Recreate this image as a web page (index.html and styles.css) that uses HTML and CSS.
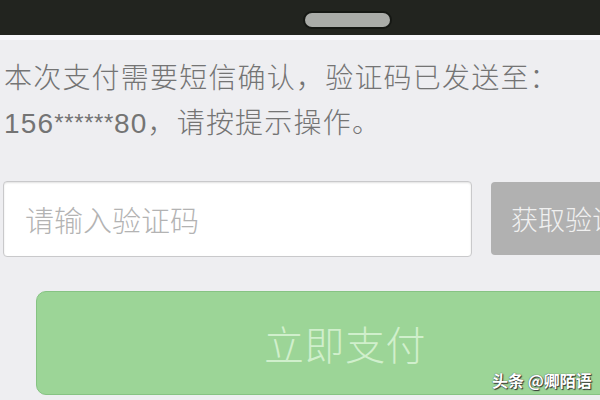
FILE: index.html
```html
<!DOCTYPE html>
<html lang="zh">
<head>
<meta charset="utf-8">
<link rel="stylesheet" href="styles.css">
</head>
<body>
<div class="screen">
  <div class="status"><div class="pill"></div></div>
  <div class="strip"></div>
  <p class="msg">本次支付需要短信确认，验证码已发送至：<br>156<span class="mask">******</span>80，请按提示操作。</p>
  <div class="row">
    <div class="input">请输入验证码</div>
    <div class="getcode">获取验证码</div>
  </div>
  <div class="pay">立即支付</div>
  <div class="watermark">头条 @卿陌语</div>
</div>
</body>
</html>
```
FILE: styles.css
```css
html, body {
  margin: 0;
  padding: 0;
  background: #eeeef1;
}
.screen {
  position: relative;
  width: 600px;
  height: 400px;
  overflow: hidden;
  font-family: "Noto Sans CJK SC", "Noto Sans", sans-serif;
  background: #eeeef1;
}
.status {
  height: 35px;
  background: #22241f;
  display: flex;
  padding-top: 13px;
  padding-left: 305px;
  box-sizing: border-box;
}
.pill {
  width: 85px;
  height: 14px;
  border-radius: 7px;
  background: #aaaca8;
  box-shadow: 0 0 0 2px #161814;
}
.strip {
  height: 5px;
  background: #f6f6fa;
}
.msg {
  margin: 17px 0 0 0;
  padding-left: 4px;
  font-family: "Liberation Sans", "Noto Sans CJK SC", sans-serif;
  font-size: 28px;
  font-weight: 300;
  line-height: 44px;
  letter-spacing: 1.2px;
  color: #747474;
  white-space: nowrap;
}
.mask {
  font-size: 24px;
  letter-spacing: 0.6px;
  vertical-align: 2px;
}
.row {
  display: flex;
  margin-top: 35px;
  margin-left: 3px;
  gap: 19px;
}
.input {
  flex: none;
  width: 469px;
  height: 76px;
  box-sizing: border-box;
  background: #fff;
  border: 1px solid #c9c9cb;
  border-radius: 4px;
  box-shadow: inset 0 1px 2px rgba(0,0,0,0.12);
  display: flex;
  align-items: center;
  padding-left: 21px;
  font-size: 29px;
  font-weight: 300;
  color: #b3b3b3;
}
.getcode {
  flex: none;
  margin-top: 1px;
  width: 160px;
  height: 73px;
  box-sizing: border-box;
  background: #b1b1b1;
  border-radius: 4px;
  display: flex;
  align-items: center;
  padding-left: 20px;
  font-size: 27px;
  font-weight: 300;
  color: #f0f0f0;
  white-space: nowrap;
}
.pay {
  margin-top: 34px;
  margin-left: 36px;
  width: 620px;
  height: 104px;
  box-sizing: border-box;
  background: #9cd597;
  border: 1px solid #86c383;
  border-radius: 10px;
  display: flex;
  align-items: center;
  justify-content: center;
  padding-right: 2px;
  font-size: 40px;
  font-weight: 300;
  letter-spacing: 0.5px;
  color: #d0efcc;
}
.watermark {
  position: absolute;
  left: 492px;
  top: 368px;
  font-size: 16px;
  font-weight: 700;
  color: #fff;
  text-shadow: 0 0 1px #333, 1px 1px 1px #333;
  white-space: nowrap;
}
```
